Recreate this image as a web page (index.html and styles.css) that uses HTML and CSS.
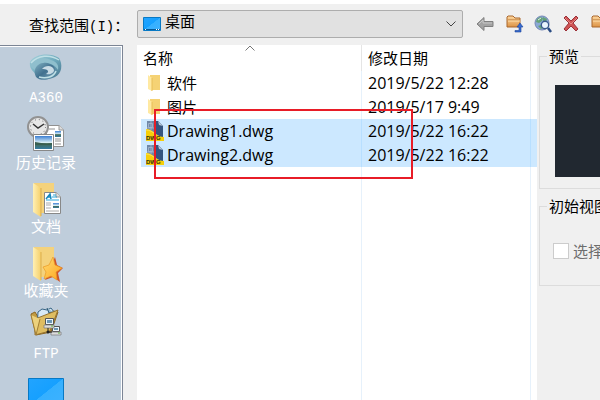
FILE: index.html
```html
<!DOCTYPE html>
<html lang="zh-CN">
<head>
  <meta charset="UTF-8">
  <meta name="viewport" content="width=device-width, initial-scale=1.0">
  <title>选择文件</title>
  <link rel="stylesheet" href="styles.css">
</head>
<body>

<!-- Shared shapes -->
<svg class="defs" width="0" height="0" aria-hidden="true">
  <defs>
    <linearGradient id="folderFill" x1="0" x2="1"><stop offset="0" stop-color="#fff0b4"/><stop offset="1" stop-color="#f5cf6a"/></linearGradient>
    <linearGradient id="deskFill" x1="0" x2="1" y2="1"><stop offset="0" stop-color="#22a4ff"/><stop offset=".49" stop-color="#16a0ff"/><stop offset=".5" stop-color="#35b0ff"/><stop offset="1" stop-color="#3eb2ff"/></linearGradient>
    <linearGradient id="photoFill" x2="0" y2="1"><stop offset="0" stop-color="#3b7ed2"/><stop offset=".5" stop-color="#d8eef5"/><stop offset=".6" stop-color="#436a51"/><stop offset="1" stop-color="#347ba3"/></linearGradient>
    <linearGradient id="swirlFill" x2="1" y2="1"><stop offset="0" stop-color="#a9d3dd"/><stop offset=".5" stop-color="#6fabbd"/><stop offset="1" stop-color="#44718c"/></linearGradient>
    <linearGradient id="swirlDark" x2="1" y2="1"><stop offset="0" stop-color="#7fb0c1"/><stop offset=".5" stop-color="#42718f"/><stop offset="1" stop-color="#7fabc0"/></linearGradient>
    <linearGradient id="orangeFill" x2="0" y2="1"><stop offset="0" stop-color="#ffd9a0"/><stop offset="1" stop-color="#dc9345"/></linearGradient>
    <linearGradient id="starFill" x2="1" y2="1"><stop offset="0" stop-color="#ffdc74"/><stop offset="1" stop-color="#ffa51c"/></linearGradient>
    <symbol id="folder" viewBox="0 0 16 18">
      <path d="M3 1h10v15H3z" fill="#f5d274"/>
      <path d="M1 1l4 3v13l-4-2z" fill="#ffe9a2"/>
      <path d="M5 4v13" stroke="#e8bd57" fill="none"/>
    </symbol>
    <symbol id="dwg" viewBox="0 0 18 20">
      <path d="M1 0h11l5 5v12H1z" fill="#6f88a8"/>
      <path d="M8 0h4l5 5v12l-9-5z" fill="#35557f"/>
      <path d="M12 0l5 5-4-1z" fill="#b9c9d8"/>
      <path d="M2.500 2.500h4v4h-4zM5 0v9M1 7h7" fill="none" stroke="#a9bad0" stroke-width=".8"/>
      <path d="M0 8c4 0 7 2 10 5 2 2 5 3 8 3v4H0z" fill="#f6cf0a"/>
      <path d="M0 9c4 0 7 2 10 5" fill="none" stroke="#ffe96b" stroke-width=".8"/>
      <text x="0" y="19" class="dwg-text">DWG</text>
    </symbol>
    <symbol id="bigFolder" viewBox="0 0 30 36">
      <path d="M1 1h20v30H7z" fill="#f4d27c"/>
      <path d="M0 1l8 5v29l-8-5z" fill="url(#folderFill)"/>
      <path d="M8 6v28" stroke="#dcad4c" fill="none"/>
    </symbol>
    <symbol id="orangeFolder" viewBox="0 0 16 14">
      <path d="M1 12V2l1-1h5l2 2h5v9z" fill="url(#orangeFill)" stroke="#a9662d"/>
      <path d="M2 5h12" stroke="#b97839"/>
      <path d="M2 6h12" stroke="#ffe0ad"/>
    </symbol>
  </defs>
</svg>

<div class="dialog">
  <header class="toolbar">
    <label class="look-label" for="look-in">查找范围<span class="latin">(I)</span>：</label>
    <div class="combo">
      <svg width="18" height="14" viewBox="0 0 18 14"><path d="M.5.5h17v13H.5z" fill="url(#deskFill)" stroke="#0879c4"/><path d="M1 12.500h16" stroke="#075996"/><path d="M2 12.500h1M13 12.500h1M15 12.500h1" stroke="#fff"/></svg>
      <select id="look-in">
        <option>桌面</option>
      </select>
      <svg class="chevron" width="10" height="6" viewBox="0 0 10 6"><path d="M.5.5L5 5 9.500.5" fill="none" stroke="#444"/></svg>
    </div>
    <div class="tools">
      <button type="button" aria-label="后退">
        <svg width="20" height="20" viewBox="0 0 20 20"><path d="M2 10l7-6.500v4h9v5H9v4z" fill="#a3a3a3" stroke="#808080"/><path d="M4 10l4-4v3h9" fill="none" stroke="#c7c7c7"/></svg>
      </button>
      <button type="button" aria-label="向上">
        <svg width="20" height="20" viewBox="0 0 20 20"><use href="#orangeFolder" x="2" y="1" width="16" height="14"/><path d="M11 16.500h4V13h-2l3-4 3 4h-2v5h-6z" fill="#376bd0" stroke="#1d459a" stroke-width=".6"/></svg>
      </button>
      <button type="button" aria-label="搜索">
        <svg width="20" height="20" viewBox="0 0 20 20"><circle cx="9" cy="9" r="7" fill="#8aa9d6" stroke="#7587b5"/><path d="M4 5l3-2 3 1-1 3-3 2-3-1zM10 3l4 2-1 3-3-1zM5 12l3-1 2 3-2 1z" fill="#65a276"/><path d="M5 6l3-2" stroke="#e2f1f2"/><circle cx="12" cy="11" r="3.700" fill="#e9f4fd" stroke="#3b5b8e" stroke-width="1.400"/><path d="M15 14l3 4" stroke="#294b83" stroke-width="2.500"/></svg>
      </button>
      <button type="button" aria-label="删除">
        <svg width="20" height="20" viewBox="0 0 20 20"><path d="M2 4l2-2 5 5 5-5 2 2-5 5 5 6-2 2-5-5-5 5-2-2 5-6z" fill="#cf5555" stroke="#9b3038"/><path d="M3 4l6 6 6-6" fill="none" stroke="#e68b88"/></svg>
      </button>
      <button type="button" aria-label="新建文件夹">
        <svg width="20" height="20" viewBox="0 0 20 20"><use href="#orangeFolder" width="16" height="14" y="1"/></svg>
      </button>
    </div>
  </header>

  <main class="content">
    <!-- Places -->
    <nav class="places">
      <button type="button" class="place">
        <svg width="40" height="42" viewBox="0 0 40 42">
          <path d="M4 15C8 7 24 5 33 11c4 6 3 16-4 19-8 4-18 3-19-3-4-3-7-7-6-12z" fill="url(#swirlFill)"/>
          <path d="M4 16c6-5 15-6 21-3 6 2 8 5 7 10-3-5-9-8-15-7-5 1-7 4-6 8-4-2-7-5-7-8z" fill="#8fbfcd"/>
          <path d="M9 23c1-6 9-9 15-6 5 2 7 6 5 10-4 6-14 8-19 3-1-2-2-5-1-7z" fill="url(#swirlDark)"/>
          <path d="M16 22c3-4 11-4 12 1 0 3-4 5-8 4 2-1 3-3 1-4-1-1-3-1-5-1z" fill="#c8dbe5"/>
          <path d="M5 16c7-8 19-9 28-3M13 30c7 2 15 0 17-6" fill="none" stroke="#c0e0e6" stroke-width="1.500"/>
        </svg>
        <span class="latin">A360</span>
      </button>
      <button type="button" class="place">
        <svg width="40" height="42" viewBox="0 0 40 42">
          <path d="M20.500 14.500h13l4 4v17h-17z" fill="#fff" stroke="#919191"/>
          <path d="M23 18h6M29 28h6M29 30h6M29 33h6" stroke="#929292"/>
          <path d="M29 20h6v6h-6z" fill="url(#photoFill)"/><path d="M33 14v5h5" fill="#ddd" stroke="#999"/>
          <circle cx="12" cy="16" r="10" fill="#e6e6e6" stroke="#929292" stroke-width="2"/>
          <circle cx="12" cy="16" r="7.500" fill="none" stroke="#666" stroke-dasharray="1 3"/>
          <path d="M7 13l5 4 6-4" fill="none" stroke="#333" stroke-width="1.500"/>
          <path d="M7.500 23.500h20v16h-20z" fill="#fff" stroke="#888"/>
          <path d="M9 25h17v13H9z" fill="url(#photoFill)"/><path d="M9 31c6 1 11 2 17 1v2H9z" fill="#395f51"/>
        </svg>
        <span>历史记录</span>
      </button>
      <button type="button" class="place">
        <svg width="40" height="42" viewBox="0 0 40 42">
          <use href="#bigFolder" x="7" y="7" width="30" height="36"/>
          <path d="M18.500 17.500h12l4 4v17h-16z" fill="#fff" stroke="#888"/>
          <path d="M30 17v5h5" fill="#ddd" stroke="#999"/><path d="M20 24l4-5 1 5M21 22h4" fill="none" stroke="#1687bd" stroke-width="1.500"/>
          <path d="M27 20h3M26 22h5M20 25h13" stroke="#2ba6dc"/><path d="M20 28h5M20 30h5M20 33h5M20 36h13" stroke="#aaa"/>
          <path d="M27 28h6v5h-6z" fill="url(#photoFill)"/>
        </svg>
        <span>文档</span>
      </button>
      <button type="button" class="place">
        <svg width="40" height="42" viewBox="0 0 40 42">
          <use href="#bigFolder" x="7" y="7" width="30" height="36"/>
          <path d="M29 18l2 8 6 3-5 5 2 9-7-5-8 3 3-7-4-6 7-1z" fill="#cf5429"/>
          <path d="M27 18l2 8 7 3-6 4 1 8-6-4-7 3 2-7-3-5 6-2z" fill="url(#starFill)" stroke="#e99a24" stroke-width=".7"/>
        </svg>
        <span>收藏夹</span>
      </button>
      <button type="button" class="place">
        <svg width="40" height="42" viewBox="0 0 40 42">
          <path d="M5 11l4-2 3 5 15-6 5 1-7 20-15 3z" fill="#c19b42" stroke="#8d6724"/>
          <path d="M12 9l4-3 5 1 4-2 3 4-5 15-12 3z" fill="#d8e9f5" stroke="#376485"/>
          <path d="M21 5l2 5 4-1" fill="#9abbd0" stroke="#26546f"/>
          <path d="M9 16l23-9-8 21-15 4z" fill="#dfbd61" stroke="#957331"/><path d="M5 12l5 20 4-16" fill="#ecd17c" stroke="#a27e34"/>
          <path d="M19.500 15.500h8v6h-8zM26.500 23.500h7v5h-7z" fill="#eaf4fa" stroke="#555"/>
          <path d="M21 17h5v3h-5zM28 25h4v2h-4z" fill="#6c98b6"/><path d="M18 22h10v3H18zM25 29h10v3H25z" fill="#ddd" stroke="#777" stroke-width=".7"/>
          <path d="M22 25v4h4" fill="none" stroke="#222"/><circle cx="22" cy="29" r="1.500" fill="#222"/><path d="M25 23h2M32 30h2" stroke="#5ab43d"/>
        </svg>
        <span class="latin">FTP</span>
      </button>
      <button type="button" class="place" aria-label="桌面">
        <svg width="40" height="42" viewBox="0 0 40 42"><path d="M2.500 11.500h35v28h-35z" fill="url(#deskFill)" stroke="#0879c4"/></svg>
      </button>
    </nav>

    <!-- File list -->
    <section class="files">
      <table class="file-table">
        <thead>
          <tr>
            <th class="col-name">名称<svg class="sort" width="10" height="6" viewBox="0 0 10 6"><path d="M.5 5.500L5 1l4.500 4.500" fill="none" stroke="#777"/></svg></th>
            <th class="col-date">修改日期</th>
            <th class="col-rest"></th>
          </tr>
        </thead>
        <tbody>
          <tr>
            <td><span class="file"><svg width="18" height="18"><use href="#folder"/></svg>软件</span></td>
            <td>2019/5/22 12:28</td>
            <td></td>
          </tr>
          <tr>
            <td><span class="file"><svg width="18" height="18"><use href="#folder"/></svg>图片</span></td>
            <td>2019/5/17 9:49</td>
            <td></td>
          </tr>
          <tr class="selected">
            <td><span class="file drawing"><svg width="18" height="20"><use href="#dwg"/></svg>Drawing1.dwg</span></td>
            <td>2019/5/22 16:22</td>
            <td></td>
          </tr>
          <tr class="selected">
            <td><span class="file drawing"><svg width="18" height="20"><use href="#dwg"/></svg>Drawing2.dwg</span></td>
            <td>2019/5/22 16:22</td>
            <td></td>
          </tr>
          <tr class="filler"><td></td><td></td><td></td></tr>
        </tbody>
      </table>
      <div class="highlight"></div>
    </section>

    <!-- Preview and options -->
    <aside class="options">
      <fieldset class="group">
        <legend>预览</legend>
        <div class="preview"></div>
      </fieldset>
      <fieldset class="group group-view">
        <legend>初始视图</legend>
        <label class="check"><input type="checkbox" disabled>选择</label>
      </fieldset>
    </aside>
  </main>
</div>

</body>
</html>
```

FILE: styles.css
```css
* {
  box-sizing: border-box;
}

body {
  margin: 0;
  font-family: "Open Sans", "Noto Sans CJK SC", sans-serif;
  font-size: 15px;
  color: #000;
  background-color: #f0f0f0;
}

button,
select {
  font: inherit;
  padding: 0;
  border: none;
  background: none;
}

svg {
  display: block;
  flex-shrink: 0;
}

.defs {
  position: absolute;
}

.dialog {
  display: flex;
  flex-direction: column;
  height: 100vh;
  overflow: hidden;
  border-top: 4px solid #fff;
}

/* Toolbar */
.toolbar {
  display: flex;
  align-items: center;
  flex: 0 0 41px;
  padding-bottom: 1px;
}

.look-label {
  flex: 0 0 137px;
  padding-left: 29px;
  padding-top: 4px;
  line-height: 20px;
  white-space: nowrap;
}

.latin {
  font-family: "Liberation Mono", monospace;
  font-size: 14px;
}

.combo {
  display: flex;
  align-items: center;
  flex: 0 0 326px;
  height: 28px;
  padding: 0 6px 0 5px;
  border: 1px solid #adadad;
  border-radius: 2px;
  background-color: #e1e1e1;
}

.combo select {
  flex: 1;
  height: 26px;
  padding: 0 0 7px 4px;
  appearance: none;
  color: #000;
}

.tools {
  display: flex;
  flex: 1;
  gap: 1px;
  min-width: 0;
  padding-left: 8px;
  overflow: hidden;
}

.tools button {
  display: flex;
  justify-content: center;
  flex: 0 0 28px;
}

/* Main area */
.content {
  display: flex;
  flex: 1;
  min-height: 0;
}

.places {
  flex: 0 0 123px;
  margin-right: 14px;
  padding-right: 30px;
  overflow: hidden;
  background-color: #bfcddb;
  border-top: 1px solid #7c8595;
  border-right: 1px solid #7c8595;
  box-shadow: inset -1px 1px #fff;
  padding-top: 1px;
}

.place {
  display: flex;
  flex-direction: column;
  align-items: center;
  width: 100%;
  height: 64px;
  color: #fff;
}

.place svg {
  overflow: visible;
}

.place span {
  line-height: 18px;
}

.files {
  position: relative;
  flex: 0 0 400px;
  padding-left: 4px;
  background-color: #fff;
}

.file-table {
  width: 100%;
  height: 100%;
  table-layout: fixed;
  border-collapse: separate;
  border-spacing: 0;
}

.file-table th {
  height: 26px;
  padding: 0 0 0 2px;
  font-weight: 400;
  line-height: 24px;
  text-align: left;
  border-right: 1px solid #e5e5e5;
}

.file-table td {
  height: 24px;
  padding: 0;
  font-size: 16px;
  line-height: 24px;
  border-right: 1px solid #e6f1fb;
}

.file-table .col-name {
  position: relative;
  width: 221px;
}

.file-table .col-date {
  width: 169px;
}

.file-table th:nth-child(2),
.file-table td:nth-child(2) {
  padding-left: 6px;
}

.file-table th:last-child,
.file-table td:last-child {
  border-right: none;
}

.sort {
  position: absolute;
  top: 0;
  left: 104px;
}

.file {
  display: flex;
  align-items: center;
  gap: 3px;
  height: 24px;
  padding-left: 5px;
  font-size: 15px;
}

.drawing {
  font-size: 16px;
}

.selected td {
  background-color: #cce8ff;
  border-right-color: #b8dfff;
}

.file-table .filler td {
  height: auto;
}

.dwg-text {
  font: bold 6px "Liberation Sans", sans-serif;
  fill: #332e0e;
}

.highlight {
  position: absolute;
  top: 64px;
  left: 17px;
  width: 259px;
  height: 70px;
  border: 2px solid #e81c27;
  pointer-events: none;
}

/* Right hand groups */
.options {
  flex: 1;
  min-width: 0;
  padding: 1px 0 0 2px;
  overflow: hidden;
}

.group {
  min-width: 0;
  height: 143px;
  margin: 0 0 7px;
  padding: 19px 0 0 15px;
  border: 1px solid #dcdcdc;
  border-right: none;
  white-space: nowrap;
}

.group legend {
  margin-left: -8px;
  padding: 0 2px;
  line-height: 20px;
}

.preview {
  height: 92px;
  background-color: #212830;
}

.group-view {
  height: 90px;
  padding: 25px 0 0 13px;
}

.group-view legend {
  margin-left: -6px;
}

.check {
  display: flex;
  align-items: center;
  gap: 4px;
  line-height: 20px;
  color: #6d6d6d;
}

.check input {
  flex-shrink: 0;
  width: 16px;
  height: 16px;
  margin: 0;
  appearance: none;
  background-color: #fff;
  border: 1px solid #ccc;
}
```
